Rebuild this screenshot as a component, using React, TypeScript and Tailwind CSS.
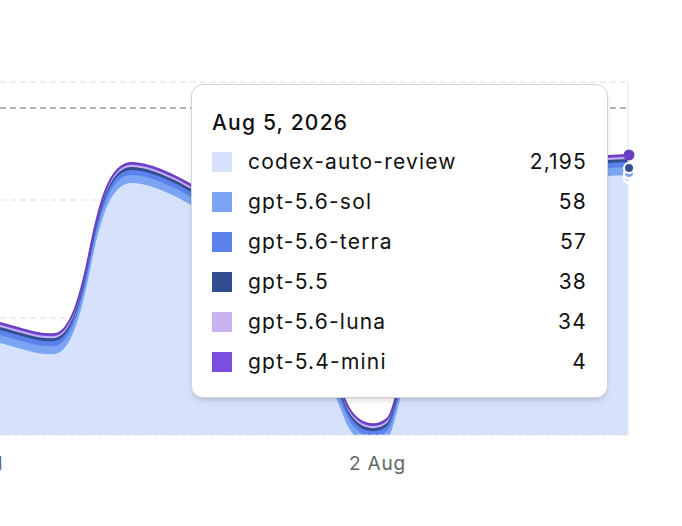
import React from "react";

const T =
  "M0,323 C20,328 40,336 55,334 C70,332 80,300 90,250 C100,200 110,165 130,163 C150,162 180,178 200,190 C250,220 320,330 345,400 C355,425 375,430 388,418 C400,405 420,250 460,190 C500,162 560,158 628,155";
const closeP = T + " L628,500 L0,500 Z";

const rows = [
  ["codex-auto-review", "2,195", "bg-[#d6e2fb]"],
  ["gpt-5.6-sol", "58", "bg-[#7ba5f2]"],
  ["gpt-5.6-terra", "57", "bg-[#5b82ec]"],
  ["gpt-5.5", "38", "bg-[#334d91]"],
  ["gpt-5.6-luna", "34", "bg-[#c8b4f0]"],
  ["gpt-5.4-mini", "4", "bg-[#7a4fe0]"],
];

export default function App() {
  const layers: [number, string][] = [
    [0, "#7a4fe0"],
    [2, "#c8b4f0"],
    [4, "#334d91"],
    [7, "#5b82ec"],
    [12, "#7ba5f2"],
    [20, "#d6e2fb"],
  ];
  return (
    <div className="relative w-[682px] h-[526px] bg-white overflow-hidden" style={{ fontFamily: "Inter, 'Noto Sans', sans-serif" }}>
      <svg className="absolute left-0 top-0" width="682" height="526">
        <defs>
          <clipPath id="c"><rect x="0" y="82" width="628" height="353" /></clipPath>
        </defs>
        <line x1="0" y1="82" x2="628" y2="82" stroke="#ddd" strokeDasharray="6 4" />
        <line x1="0" y1="200" x2="628" y2="200" stroke="#ddd" strokeDasharray="6 4" />
        <line x1="0" y1="318" x2="628" y2="318" stroke="#ddd" strokeDasharray="6 4" />
        <g clipPath="url(#c)">
          {layers.map(([dy, c]) => (
            <path key={dy} d={closeP} fill={c} transform={`translate(0,${dy})`} />
          ))}
          <path d={T} fill="none" stroke="#6a3fc0" strokeWidth="2" />
        </g>
        <line x1="0" y1="108" x2="628" y2="108" stroke="#666" strokeDasharray="6 4" />
        <line x1="0" y1="435" x2="628" y2="435" stroke="#ddd" strokeDasharray="4 3" />
        <line x1="628" y1="82" x2="628" y2="435" stroke="#e5e5e5" />
        <circle cx="629" cy="178" r="5" fill="none" stroke="#fff" strokeWidth="2" />
        <circle cx="629" cy="173" r="5" fill="#7ba5f2" stroke="#fff" strokeWidth="2" />
        <circle cx="629" cy="168" r="5" fill="#334d91" stroke="#fff" strokeWidth="2" />
        <circle cx="629" cy="155" r="5.5" fill="#6a3fc0" />
        <text x="-5" y="470" fontSize="19" fill="#666">1</text>
        <text x="349" y="470" fontSize="19" fill="#666" letterSpacing="0.8">2 Aug</text>
      </svg>
      <div className="absolute left-[191px] top-[84px] w-[417px] h-[314px] bg-white border border-[#d4d4d4] rounded-[12px] shadow-md px-[20px] pt-[23px] tracking-[1.2px]">
        <div className="text-[21px] font-medium text-[#111] leading-[30px] mb-[4px]">Aug 5, 2026</div>
        {rows.map(([n, v, c]) => (
          <div key={n} className="flex items-center h-[40px] text-[21px] text-[#111]">
            <div className={`w-[20px] h-[20px] ${c} mr-[16px]`} />
            <div className="flex-1">{n}</div>
            <div>{v}</div>
          </div>
        ))}
      </div>
    </div>
  );
}
